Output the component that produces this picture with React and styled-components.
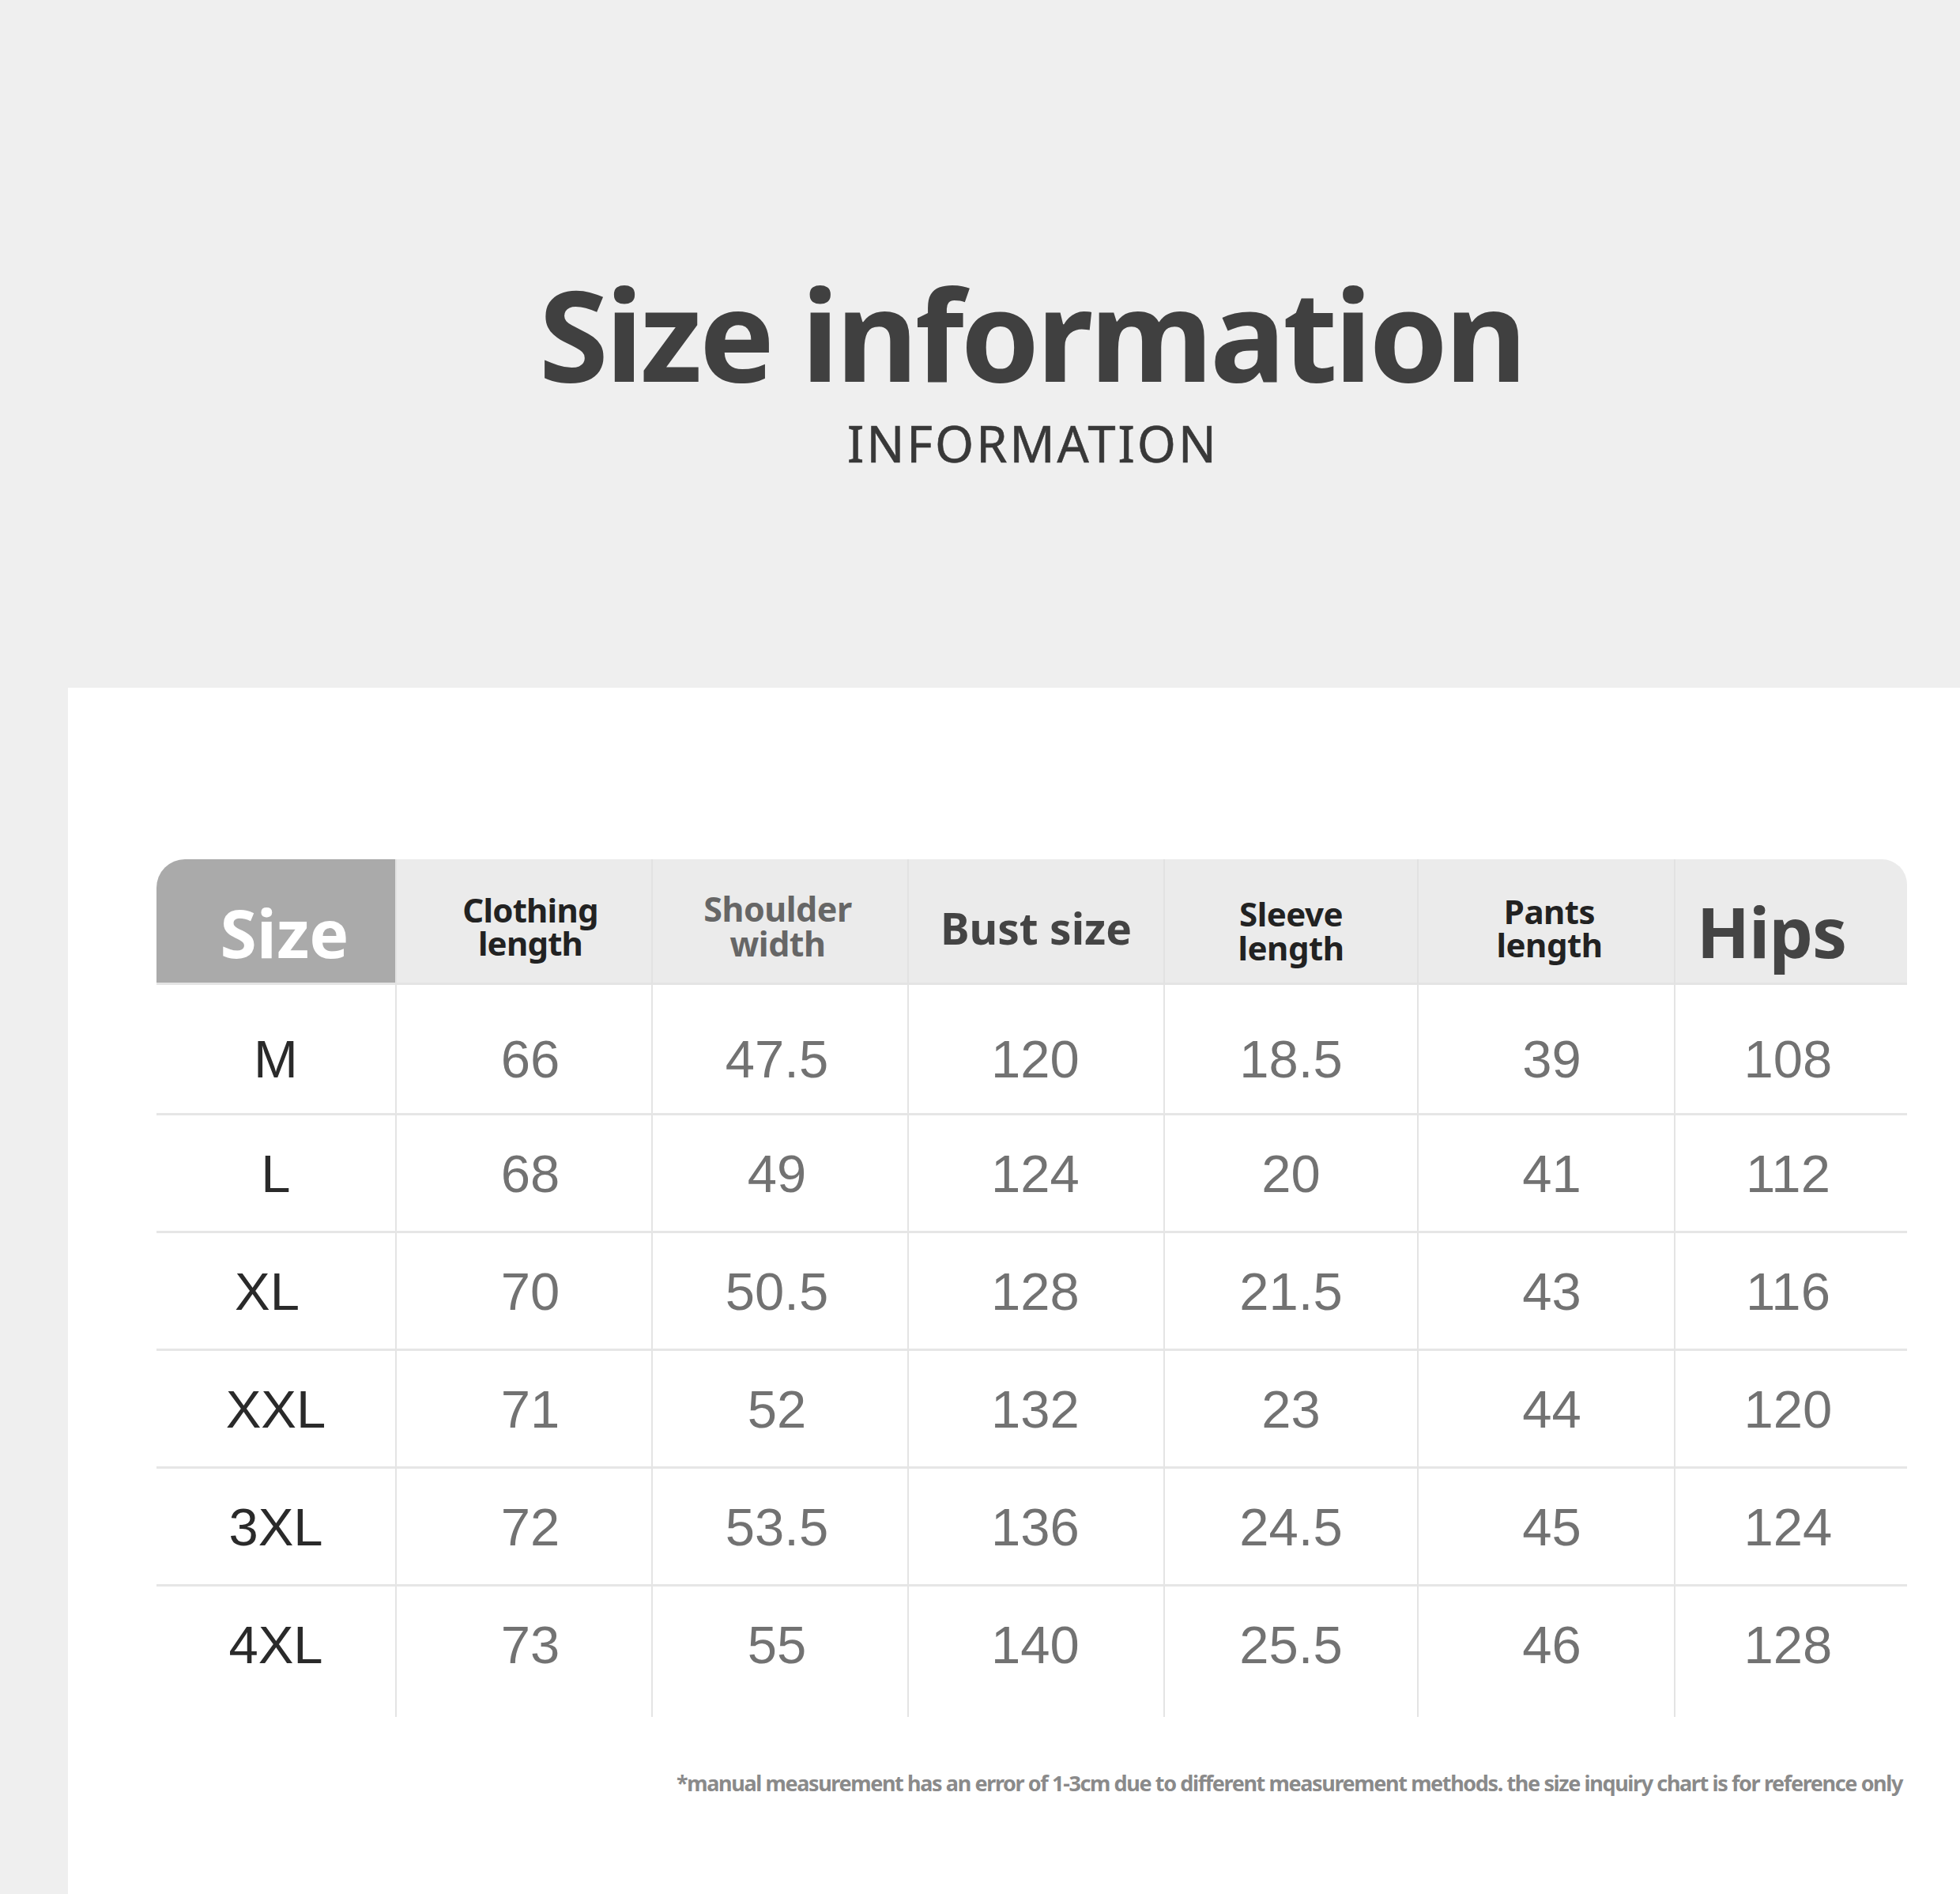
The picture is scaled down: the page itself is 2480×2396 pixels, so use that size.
import React from "react";
import styled, { createGlobalStyle } from "styled-components";

const GlobalStyle = createGlobalStyle`
  body {
    margin: 0;
    background: #efefef;
  }
`;

const Page = styled.div`
  width: 2480px;
  height: 2396px;
  display: flex;
  flex-direction: column;
  background: #efefef;
  overflow: hidden;
`;

const Heading = styled.header`
  height: 870px;
  flex: none;
  box-sizing: border-box;
  padding-top: 341px;
  padding-left: 130px;
  display: flex;
  flex-direction: column;
  align-items: center;
`;

const Title = styled.h1`
  margin: 0;
  font-family: "Noto Sans", sans-serif;
  font-weight: 700;
  font-size: 160px;
  line-height: 160px;
  letter-spacing: -4px;
  color: #404040;
`;

const Subtitle = styled.div`
  margin-top: 28px;
  margin-left: 4px;
  font-family: "Noto Sans", sans-serif;
  font-size: 63px;
  line-height: 63px;
  letter-spacing: 3px;
  color: #383838;
  -webkit-text-stroke: 0.6px #383838;
`;

const Panel = styled.section`
  flex: 1;
  margin-left: 86px;
  background: #ffffff;
  padding: 217px 0 0 112px;
`;

const Table = styled.div`
  width: 2215px;
  display: grid;
  grid-template-columns: 302px 324px 324px 324px 321px 325px 295px;
`;

const HeadCell = styled.div`
  height: 159px;
  box-sizing: border-box;
  display: flex;
  flex-direction: column;
  align-items: center;
  justify-content: center;
  text-align: center;
  background: ${(p) => (p.$accent ? "#aaaaaa" : "#ebebeb")};
  border-left: ${(p) => (p.$first ? "none" : "2px solid #e2e2e2")};
  border-bottom: 3px solid #e4e4e4;
  border-top-left-radius: ${(p) => (p.$first ? "36px" : "0")};
  border-top-right-radius: ${(p) => (p.$last ? "32px" : "0")};
  padding-top: ${(p) => p.$top || 0}px;
  padding-left: ${(p) => p.$left || 0}px;
  padding-right: ${(p) => p.$right || 0}px;
  font-family: "Noto Sans", sans-serif;
  font-weight: 700;
  font-size: ${(p) => p.$size}px;
  line-height: ${(p) => p.$lh || p.$size}px;
  letter-spacing: ${(p) => p.$ls ?? -0.5}px;
  color: ${(p) => p.$color};
`;

const Cell = styled.div`
  height: ${(p) => p.$h}px;
  box-sizing: border-box;
  display: flex;
  align-items: center;
  justify-content: center;
  padding-top: ${(p) => p.$pt || 0}px;
  padding-bottom: ${(p) => p.$pb || 0}px;
  padding-left: ${(p) => Math.max(p.$shift, 0) * 2}px;
  padding-right: ${(p) => Math.max(-p.$shift, 0) * 2}px;
  border-top: ${(p) => (p.$lined ? "3px solid #e6e6e6" : "none")};
  border-left: ${(p) => (p.$first ? "none" : "2px solid #e4e4e4")};
  font-family: "Liberation Sans", Arial, sans-serif;
  font-size: 67px;
  line-height: 67px;
  color: ${(p) => (p.$first ? "#2a2a2a" : "#727272")};
`;

const Note = styled.p`
  width: 2215px;
  box-sizing: border-box;
  margin: 66px 0 0;
  padding-right: 6px;
  text-align: right;
  font-family: "Noto Sans", sans-serif;
  font-weight: 700;
  font-size: 27px;
  letter-spacing: -1.38px;
  line-height: 36px;
  color: #8a8a8a;
`;

const headers = [
  { lines: ["Size"], size: 84, ls: 0, color: "#ffffff", top: 30, left: 22, accent: true },
  { lines: ["Clothing", "length"], size: 42, ls: -0.8, color: "#222222", top: 13, left: 16 },
  { lines: ["Shoulder", "width"], size: 43, lh: 44, color: "#666666", top: 13, right: 6 },
  { lines: ["Bust size"], size: 55, ls: 0, color: "#444444", top: 16 },
  { lines: ["Sleeve", "length"], size: 42, lh: 43, color: "#222222", top: 23 },
  { lines: ["Pants", "length"], size: 42, color: "#222222", top: 17, left: 8 },
  { lines: ["Hips"], size: 88, ls: -1, color: "#444444", top: 25, right: 50 },
];

const shifts = [0, 8, -4, -1, 0, 7, -4];

const rows = [
  ["M", "66", "47.5", "120", "18.5", "39", "108"],
  ["L", "68", "49", "124", "20", "41", "112"],
  ["XL", "70", "50.5", "128", "21.5", "43", "116"],
  ["XXL", "71", "52", "132", "23", "44", "120"],
  ["3XL", "72", "53.5", "136", "24.5", "45", "124"],
  ["4XL", "73", "55", "140", "25.5", "46", "128"],
];

const rowBox = (i) => {
  if (i === 0) return { h: 162, pt: 24, pb: 0 };
  if (i === rows.length - 1) return { h: 168, pt: 0, pb: 18 };
  return { h: 149, pt: 0, pb: 0 };
};

export default function App() {
  return (
    <Page>
      <GlobalStyle />
      <Heading>
        <Title>Size information</Title>
        <Subtitle>INFORMATION</Subtitle>
      </Heading>
      <Panel>
        <Table>
          {headers.map((h, i) => (
            <HeadCell
              key={i}
              $first={i === 0}
              $last={i === headers.length - 1}
              $accent={h.accent}
              $size={h.size}
              $lh={h.lh}
              $ls={h.ls}
              $color={h.color}
              $top={h.top}
              $left={h.left}
              $right={h.right}
            >
              {h.lines.map((l) => (
                <span key={l}>{l}</span>
              ))}
            </HeadCell>
          ))}
          {rows.map((row, r) => {
            const box = rowBox(r);
            return row.map((v, c) => (
              <Cell
                key={`${r}-${c}`}
                $h={box.h}
                $pt={box.pt}
                $pb={box.pb}
                $shift={c === 0 && v === "XL" ? -11 : shifts[c]}
                $lined={r > 0}
                $first={c === 0}
              >
                {v}
              </Cell>
            ));
          })}
        </Table>
        <Note>
          *manual measurement has an error of 1-3cm due to different measurement methods. the size inquiry chart is for reference only
        </Note>
      </Panel>
    </Page>
  );
}
